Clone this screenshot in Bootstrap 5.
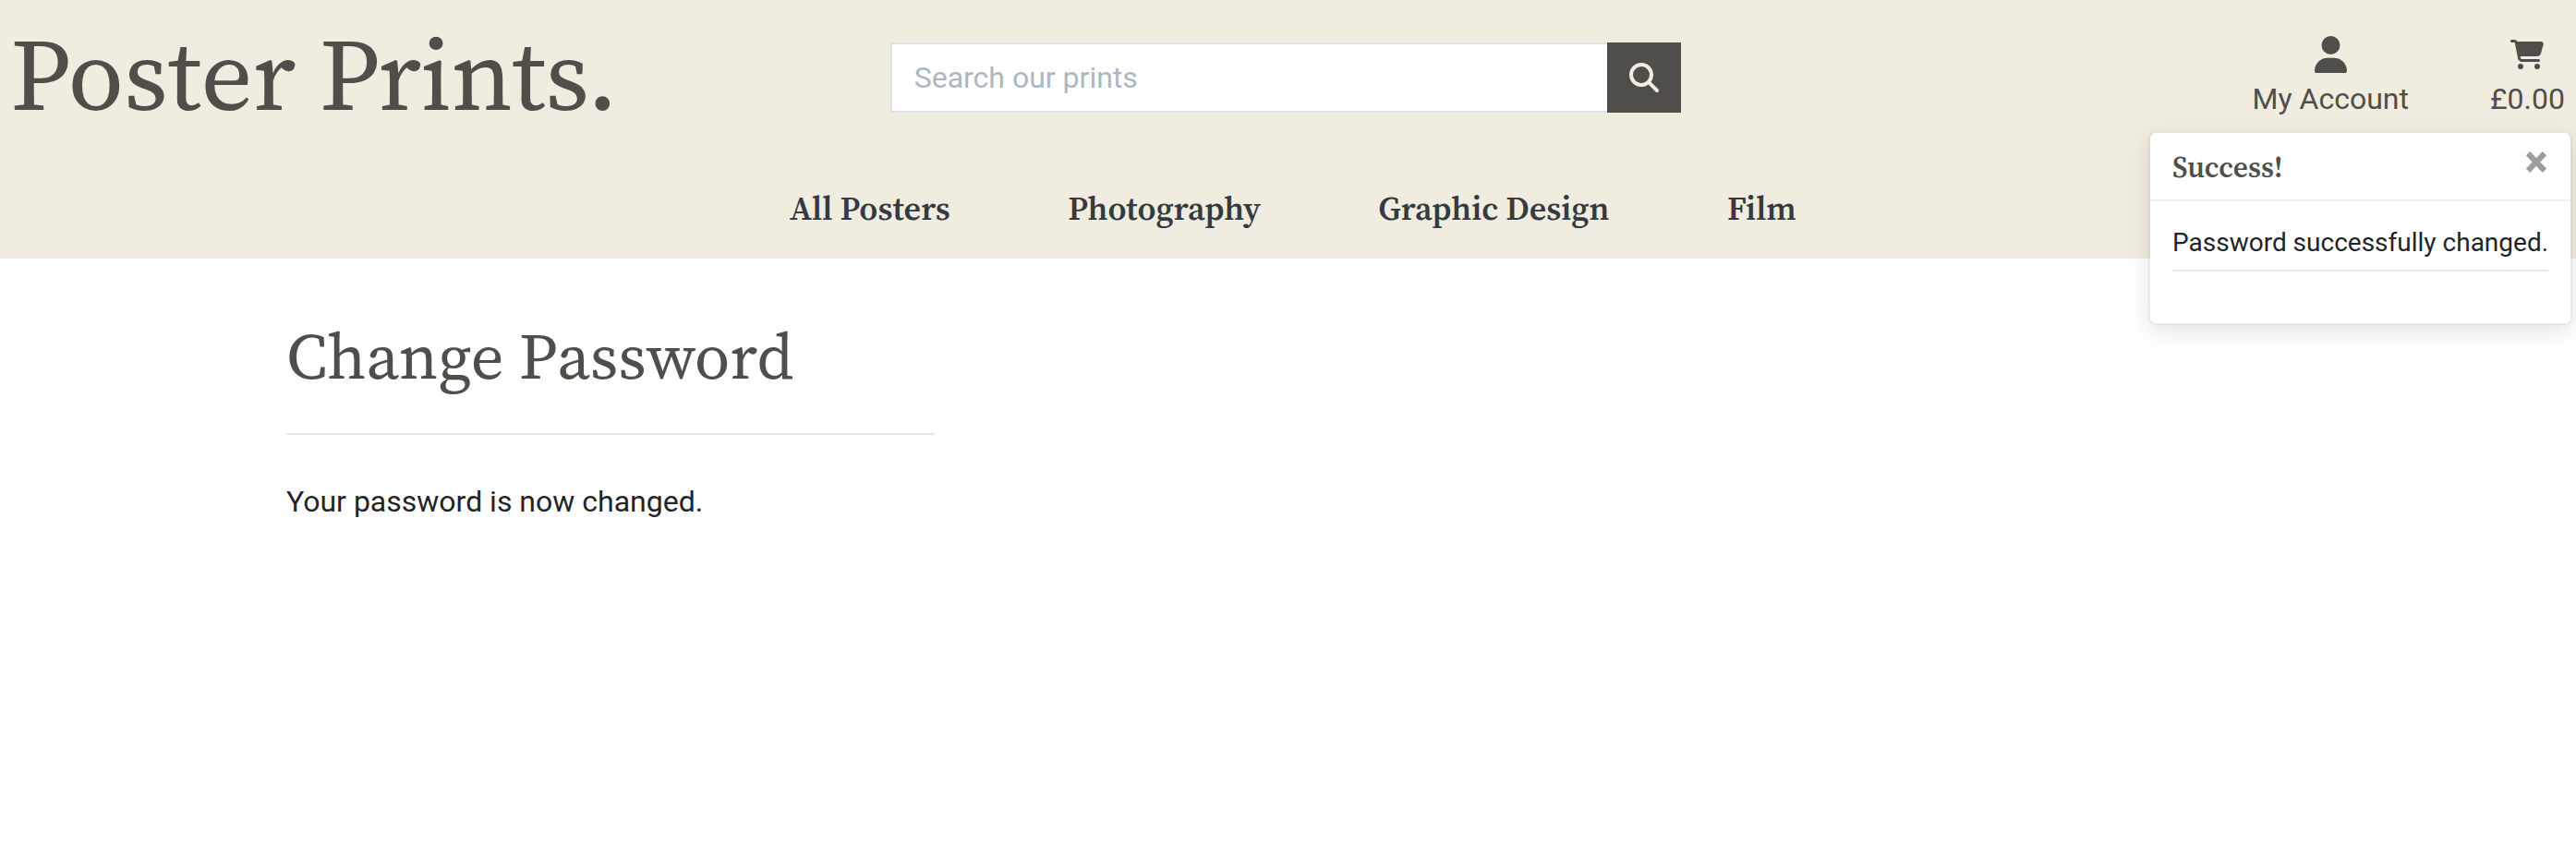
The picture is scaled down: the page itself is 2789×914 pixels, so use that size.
<!DOCTYPE html>
<html lang="en">
<head>
<meta charset="utf-8">
<meta name="viewport" content="width=device-width, initial-scale=1">
<title>Poster Prints</title>
<link href="https://cdn.jsdelivr.net/npm/bootstrap@5.3.0/dist/css/bootstrap.min.css" rel="stylesheet">
<style>
html { font-size: 32px; }
body { font-family: Roboto, "Liberation Sans", sans-serif; color: #212529; background: #fff; overflow: hidden; }
.serif { font-family: "Source Serif Pro", "Source Serif 4", "Liberation Serif", serif; }
.site-header { background: #f0ecdf; height: 280px; }
.top-row { height: 168px; }
.ink { color: #504e4b; }
.logo { font-size: 110.4px; line-height: 134px; letter-spacing: -.2px; padding: 14px 0 0 11px; white-space: nowrap; }
.search-box { width: 856px; height: 76px; margin: 46px 0 0 34px; flex-wrap: nowrap; }
.search-box .form-control { border: 2px solid #dee2e6; border-right: 0; border-radius: 0; padding: 0 0 0 24px; }
.search-box .form-control::placeholder { color: #aab7c4; opacity: 1; }
.search-box .btn { width: 80px; border-radius: 0; background: #504e4b; color: #f0ecdf; padding: 0; border: 0; }
.tool-links { padding: 34px 12px 0 0; gap: 88px; }
.tool-links a { line-height: 48px; }
.tool-icon { height: 49px; display: flex; align-items: center; justify-content: center; }
.main-nav { gap: 127.500px; padding-left: 855px; padding-top: 31px; }
.main-nav .nav-link { font-size: 36px; line-height: 54px; font-weight: 600; color: #343a40; padding: 0; white-space: nowrap; }
.content { padding: 63px 0 0 310px; }
.content h1 { font-size: 70.4px; line-height: 85px; letter-spacing: -.15px; font-weight: 400; margin: 0; }
.rule { height: 2px; background: #e5e5e5; border: 0; opacity: 1; }
.content .rule { width: 701px; margin: 41px 0 48px; }
.message { position: absolute; top: 142px; right: 4px; width: 459px; height: 210px; max-width: none; font-size: 28px; background: #fff; background-clip: padding-box; border: 2px solid rgba(0,0,0,.06); border-top-color: rgba(0,0,0,.02); border-radius: 8px; box-shadow: 0 8px 24px rgba(0,0,0,.1); }
.message .toast-header { height: 74px; padding: 0 24px; background: #fff; border-bottom: 2px solid #efefef; }
.message strong { font-size: 31.4px; line-height: 44px; font-weight: 600; padding-top: 1px; }
.message .toast-body { padding: 24px 24px 0; line-height: 42px; white-space: nowrap; }
.message .rule { margin: 8px 0 0; }
.message .x-mark { line-height: 0; color: #999da0; margin-bottom: 9px; margin-right: 2px; }
</style>
</head>
<body>
<header class="site-header">
  <div class="row g-0 top-row">
    <div class="col-4"><a href="#" class="logo serif ink d-block text-decoration-none">Poster Prints.</a></div>
    <div class="col-4">
      <form class="input-group search-box">
        <input class="form-control" type="text" placeholder="Search our prints" aria-label="Search">
        <button class="btn d-flex align-items-center justify-content-center" type="button" aria-label="Search">
          <svg width="32" height="32" viewBox="0 0 512 512" fill="currentColor"><path d="M416 208c0 45.900-14.900 88.300-40 122.700L502.600 457.400c12.500 12.500 12.500 32.800 0 45.300s-32.800 12.500-45.300 0L330.700 376c-34.400 25.200-76.800 40-122.700 40C93.100 416 0 322.900 0 208S93.100 0 208 0S416 93.100 416 208zM208 352a144 144 0 1 0 0-288 144 144 0 1 0 0 288z"/></svg>
        </button>
      </form>
    </div>
    <div class="col-4 d-flex justify-content-end align-items-start tool-links text-center">
      <a href="#" class="ink text-decoration-none"><span class="tool-icon"><svg width="35" height="40" viewBox="0 0 448 512" fill="currentColor"><path d="M224 256A128 128 0 1 0 224 0a128 128 0 1 0 0 256zm-45.700 48C79.800 304 0 383.800 0 482.300C0 498.700 13.300 512 29.700 512H418.300c16.400 0 29.700-13.300 29.700-29.700C448 383.800 368.200 304 269.700 304H178.300z"/></svg></span>My Account</a>
      <a href="#" class="ink text-decoration-none"><span class="tool-icon"><svg width="36" height="32" viewBox="0 0 576 512" fill="currentColor"><path d="M0 24C0 10.700 10.700 0 24 0H69.500c22 0 41.500 12.800 50.600 32h411c26.300 0 45.500 25 38.600 50.400l-41 152.300c-8.500 31.400-37 53.300-69.500 53.300H170.700l5.400 28.500c2.200 11.300 12.100 19.500 23.600 19.500H488c13.300 0 24 10.700 24 24s-10.700 24-24 24H199.700c-34.600 0-64.300-24.600-70.700-58.500L77.400 54.500c-.7-3.800-4-6.500-7.900-6.500H24C10.700 48 0 37.300 0 24zM128 464a48 48 0 1 1 96 0 48 48 0 1 1-96 0zm336-48a48 48 0 1 1 0 96 48 48 0 1 1 0-96z"/></svg></span>£0.00</a>
    </div>
  </div>
  <nav class="nav main-nav serif flex-nowrap">
    <a class="nav-link" href="#">All Posters</a>
    <a class="nav-link" href="#">Photography</a>
    <a class="nav-link" href="#">Graphic Design</a>
    <a class="nav-link" href="#">Film</a>
  </nav>
</header>

<div class="toast show message" role="alert">
  <div class="toast-header">
    <strong class="me-auto serif ink">Success!</strong>
    <span class="x-mark"><svg width="22" height="23" viewBox="0 0 22 23" stroke="currentColor" stroke-width="6.200"><path d="M2 2.200 20 20.800M20 2.200 2 20.800"/></svg></span>
  </div>
  <div class="toast-body">Password successfully changed.<hr class="rule"></div>
</div>

<main class="content">
  <h1 class="serif ink">Change Password</h1>
  <hr class="rule">
  <p class="mb-0">Your password is now changed.</p>
</main>
<script src="https://cdn.jsdelivr.net/npm/bootstrap@5.3.0/dist/js/bootstrap.bundle.min.js"></script>
</body>
</html>
